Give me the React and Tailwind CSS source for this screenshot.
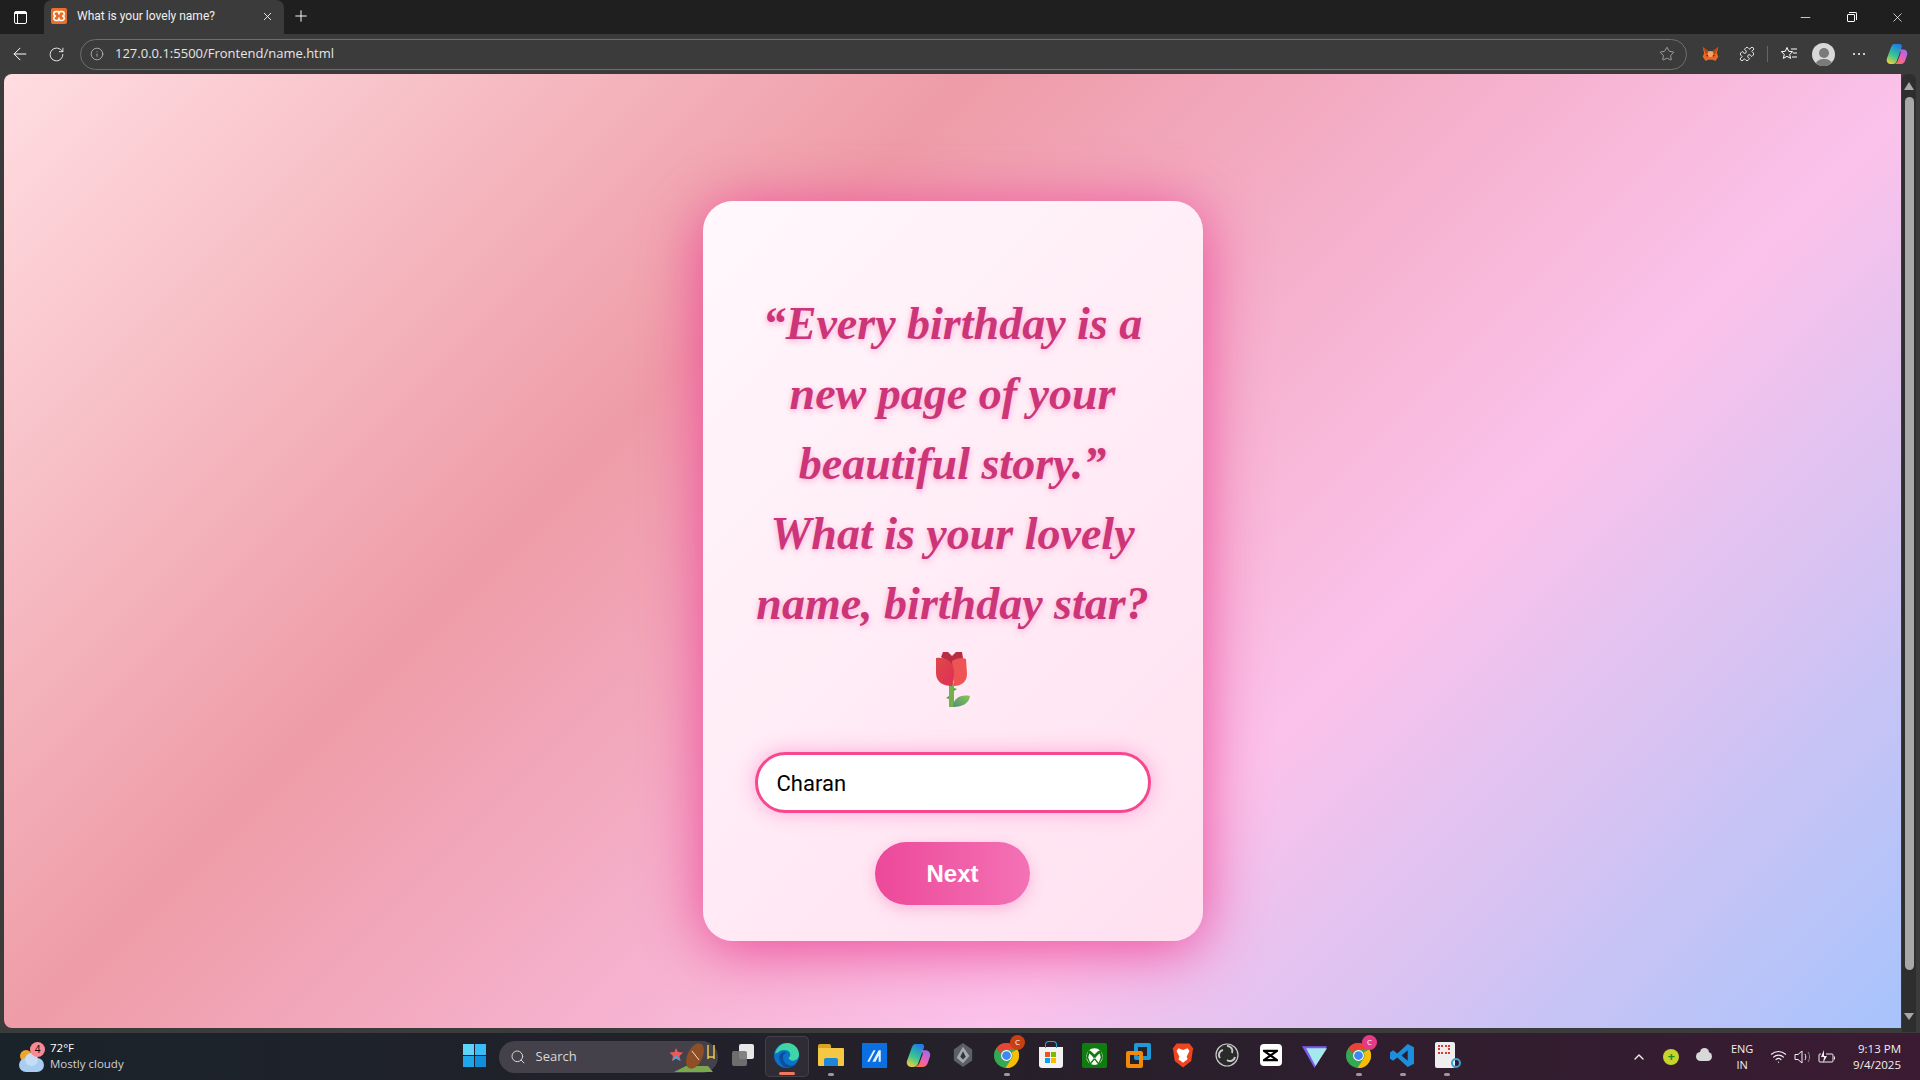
import { ArrowLeft, RotateCw, Info, Star, Puzzle, Plus, X, Minus, Search, ChevronUp, Wifi } from 'lucide-react'

const QUOTE_LINES = [
  '“Every birthday is a',
  'new page of your',
  'beautiful story.”',
  'What is your lovely',
  'name, birthday star?',
]

function Rose() {
  return (
    <svg viewBox="0 0 36 56" className="block h-[56px] w-[36px]">
      <defs>
        <linearGradient id="petal" x1="0" y1="0" x2="1" y2="1">
          <stop offset="0" stopColor="#e04848" />
          <stop offset="1" stopColor="#dd2f57" />
        </linearGradient>
        <linearGradient id="leaf" x1="1" y1="0" x2="0" y2="1">
          <stop offset="0" stopColor="#8bc653" />
          <stop offset="1" stopColor="#4f8f7a" />
        </linearGradient>
      </defs>
      <path d="M14 32h5v24h-5z" fill="#74b04c" />
      <path d="M11 47l3-2v3zM19 37l3 1-3 2z" fill="#5f9a3e" />
      <path d="M18 56c0-8 7-13 17-11-1 7-7 11-17 11z" fill="url(#leaf)" />
      <path d="M6 6l2-5 5 0 4 4 4-4 6 0 1 6-10 8z" fill="#b82c44" />
      <path d="M17 10c5-3 10-4 14-2l1 15c0 8-6 12-13 12z" fill="#ee5454" />
      <path d="M1 7c8-1 14 2 17 8 2 7 1 14-1 20-9 0-16-4-16-13z" fill="url(#petal)" />
    </svg>
  )
}

function XamppIcon() {
  return (
    <svg viewBox="0 0 16 16" className="size-4">
      <rect width="16" height="16" rx="2" fill="#e8702a" />
      <path d="M5 3.5h2L8 5.5l1-2h2a2.2 2.2 0 0 1 0 4.5 2.2 2.2 0 0 1 0 4.5H9l-1-2-1 2H5A2.2 2.2 0 0 1 5 8a2.2 2.2 0 0 1 0-4.5z" fill="none" stroke="#fff" strokeWidth="1.5" />
    </svg>
  )
}

function MetaMask() {
  return (
    <svg viewBox="0 0 24 22" className="h-[16px] w-[17px]">
      <path d="M1 1l8 6h6l8-6-2 9 2 5-4 6-4-2h-6l-4 2-4-6 2-5z" fill="#e8682a" />
      <path d="M9 7h6l1 6-4 3-4-3z" fill="#f6a168" />
      <path d="M6 12l3 1-2 2zM18 12l-3 1 2 2z" fill="#33210f" />
      <path d="M1 1l8 6-3 5zM23 1l-8 6 3 5z" fill="#b04a17" />
    </svg>
  )
}

function FavoritesIcon() {
  return (
    <svg viewBox="0 0 18 16" className="h-[16px] w-[18px]" fill="none" stroke="#fff" strokeWidth="1">
      <path d="M7 1.5l1.7 3.8 4 .4-3 2.7.9 4-3.6-2.1-3.6 2.1.9-4-3-2.7 4-.4z" />
      <path d="M11 3h6M13 7h4M12 11h5" />
    </svg>
  )
}

function CopilotIcon({ size = 22, id = 'cp' }) {
  return (
    <svg viewBox="0 0 24 24" style={{ width: size, height: size }}>
      <defs>
        <linearGradient id={`${id}a`} x1="0.6" y1="0" x2="0.2" y2="1">
          <stop offset="0" stopColor="#1f7fe0" />
          <stop offset="0.55" stopColor="#39c78f" />
          <stop offset="1" stopColor="#f4cf3c" />
        </linearGradient>
        <linearGradient id={`${id}b`} x1="0.8" y1="0" x2="0.2" y2="1">
          <stop offset="0" stopColor="#9a6cf0" />
          <stop offset="0.55" stopColor="#ee5fb8" />
          <stop offset="1" stopColor="#f5793f" />
        </linearGradient>
      </defs>
      <path d="M9 1h6c2 0 3 2 2 4l-5 14c-1 3-3 4-5 4H5c-3 0-5-3-4-6l4-11c1-3 2-5 4-5z" fill={`url(#${id}a)`} />
      <path d="M13 7h6c3 0 5 3 4 6l-2 6c-1 3-3 4-5 4h-7c2-1 3-2 4-4l3-8c.5-2-1-4-3-4z" fill={`url(#${id}b)`} />
    </svg>
  )
}

function EdgeIcon() {
  return (
    <svg viewBox="0 0 24 24" className="size-[25px]">
      <circle cx="12" cy="12" r="12" fill="#0c72c7" />
      <path d="M1 10C3 3 8 0 13 0c6 0 11 5 11 11 0 4-3 6-6 6-2 0-4-1-4-3 2-1 2-3 1-5-2-3-8-3-11 0z" fill="#3ed6a7" />
      <path d="M5 14c0-4 4-6 7-5-3 1-4 4-3 7 1 4 6 7 11 5-3 3-7 3-10 2-3-2-5-5-5-9z" fill="#0a4f9e" />
    </svg>
  )
}

function ChromeIcon() {
  return (
    <svg viewBox="0 0 24 24" className="size-[25px]">
      <circle cx="12" cy="12" r="12" fill="#34a853" />
      <path d="M12 0a12 12 0 0 1 10.4 6H12a6 6 0 0 0-5.6 3.6L2.3 5A12 12 0 0 1 12 0z" fill="#ea4335" />
      <path d="M22.4 6A12 12 0 0 1 11 24l5.2-8.2A6 6 0 0 0 17 9z" fill="#fbbc05" />
      <circle cx="12" cy="12" r="5.2" fill="#fff" />
      <circle cx="12" cy="12" r="4.2" fill="#4285f4" />
    </svg>
  )
}

function Badge({ color }) {
  return (
    <span className={`absolute -right-[6px] -top-[8px] flex size-[15px] items-center justify-center rounded-full text-[8px] text-white ${color}`}>
      C
    </span>
  )
}

function Dock({ children, dot, active }) {
  return (
    <div className={`relative flex h-[41px] w-[44px] items-center justify-center rounded-[5px] ${active ? 'border border-white/10 bg-white/5' : ''}`}>
      <div className="relative -mt-[3px] flex items-center justify-center">{children}</div>
      {dot && <span className="absolute bottom-[1px] left-1/2 h-[3px] w-[6px] -translate-x-1/2 rounded-full bg-[#9a9a9a]" />}
      {active && <span className="absolute bottom-[1px] left-1/2 h-[3px] w-[16px] -translate-x-1/2 rounded-full bg-[#f0785f]" />}
    </div>
  )
}

export default function App() {
  return (
    <div className="flex h-screen flex-col overflow-hidden bg-[#3b3b3b] font-['Open_Sans',sans-serif] text-white">

      {/* Tab strip */}
      <div className="flex h-[34px] shrink-0 items-end bg-[#1f1f1f]">
        <div className="flex h-[34px] w-[44px] items-center justify-center pr-[4px]">
          <div className="relative h-[13px] w-[13px] rounded-[2px] border-[1.5px] border-white">
            <div className="h-[2px] bg-white" />
            <div className="absolute bottom-0 left-[2px] top-0 w-[1.5px] bg-white" />
          </div>
        </div>
        <div className="flex h-[34px] w-[240px] items-center rounded-t-[8px] bg-[#3b3b3b] pb-[2px] pl-[7px] pr-[10px]">
          <XamppIcon />
          <span className="ml-[10px] flex-1 font-['Roboto',sans-serif] text-[12px] text-[#f0f0f0]">What is your lovely name?</span>
          <X size={13} strokeWidth={1.6} />
        </div>
        <div className="flex h-[34px] w-[34px] items-center justify-center pb-[2px]">
          <Plus size={18} strokeWidth={1.3} />
        </div>
        <div className="ml-auto flex h-[34px] items-center">
          <div className="flex w-[46px] justify-center"><Minus size={15} strokeWidth={1.2} /></div>
          <div className="flex w-[46px] justify-center">
            <div className="relative mt-[2px] size-[8px] rounded-[1px] border border-white after:absolute after:-right-[3px] after:-top-[3px] after:size-[8px] after:rounded-tr-[2px] after:border-r after:border-t after:border-white" />
          </div>
          <div className="flex w-[46px] justify-center"><X size={15} strokeWidth={1.2} /></div>
        </div>
      </div>

      {/* Toolbar */}
      <div className="flex h-[40px] shrink-0 items-center">
        <div className="flex w-[40px] justify-center"><ArrowLeft size={20} strokeWidth={1.2} /></div>
        <div className="flex w-[32px] justify-center"><RotateCw size={17} strokeWidth={1.2} /></div>
        <div className="ml-[8px] flex h-[31px] w-[1607px] shrink-0 items-center rounded-full border border-[#6f6f6f] pl-[9px] pr-[11px]">
          <Info size={14} strokeWidth={1.3} className="text-[#c8c8c8]" />
          <span className="ml-[11px] flex-1 text-[13px] text-[#e6e6e6]">127.0.0.1:5500/Frontend/name.html</span>
          <Star size={16} strokeWidth={1.2} className="text-[#b5b5b5]" />
        </div>
        <div className="flex w-[32px] justify-end"><MetaMask /></div>
        <div className="flex w-[37px] justify-end"><Puzzle size={16} strokeWidth={1.3} className="mr-[1px]" /></div>
        <div className="ml-[11px] h-[16px] w-px bg-[#666]" />
        <div className="ml-[8px] flex w-[26px] justify-center"><FavoritesIcon /></div>
        <div className="ml-[10px] flex size-[23px] items-end justify-center overflow-hidden rounded-full bg-[#d8d8d8]">
          <div className="relative h-[18px] w-[23px]">
            <div className="mx-auto size-[10px] rounded-full bg-[#7a7a7a]" />
            <div className="mx-auto mt-[1px] h-[8px] w-[18px] rounded-t-full bg-[#7a7a7a]" />
          </div>
        </div>
        <div className="ml-[18px] flex gap-[3px]">
          <span className="size-[2px] rounded-full bg-white" />
          <span className="size-[2px] rounded-full bg-white" />
          <span className="size-[2px] rounded-full bg-white" />
        </div>
        <div className="ml-[21px]"><CopilotIcon id="cpt" /></div>
      </div>

      {/* Page */}
      <div className="flex min-h-0 flex-1 pl-[4px]">
        <main className="flex h-[954px] flex-1 items-center justify-center rounded-l-[8px] bg-[linear-gradient(135deg,#ffdde1,#ee9ca7,#fbc2eb,#a1c4fd)] bg-[length:100%_1010px] bg-no-repeat">
          <div className="mt-[40px] flex h-[740px] w-[500px] flex-col items-center rounded-[30px] bg-[linear-gradient(135deg,#fff8fc,#ffe0f0)] px-[40px] pt-[88px] shadow-[0_8px_60px_#ec4899]">
            <h1 className="text-center font-['Liberation_Serif',cursive] text-[46px] font-bold italic leading-[70px] text-[#cc3577] [text-shadow:0_2px_6px_#f9a8d4]">
              {QUOTE_LINES.map(line => <div key={line} className="whitespace-nowrap">{line}</div>)}
            </h1>
            <div className="mt-[12px]"><Rose /></div>
            <input
              readOnly
              value="Charan"
              className="mt-[45px] h-[61px] w-[396px] rounded-full border-[3px] border-[#f7488f] bg-white pl-[19px] pt-[2px] font-['Roboto',sans-serif] text-[22px] text-black shadow-[0_0_20px_#ffa8d8] outline-none"
            />
            <button className="mt-[29px] h-[63px] w-[155px] rounded-full bg-[linear-gradient(90deg,#ec4899,#f472b6)] font-['Liberation_Sans',sans-serif] text-[24px] font-bold text-white shadow-[0_4px_15px_#fbb6d9]">
              Next
            </button>
          </div>
        </main>

        {/* Scrollbar */}
        <div className="flex w-[19px] pl-[1px]">
          <div className="flex h-[958px] w-[14px] flex-col items-center rounded-t-[6px] bg-[#2e2e2e] pt-[8px]">
            <div className="h-0 w-0 border-x-[5px] border-b-[8px] border-x-transparent border-b-[#a8a8a8]" />
            <div className="mt-[7px] h-[873px] w-[9px] rounded-full bg-[#a8a8a8]" />
            <div className="mt-[43px] h-0 w-0 border-x-[5px] border-t-[7px] border-x-transparent border-t-[#a8a8a8]" />
          </div>
        </div>
      </div>

      {/* Taskbar */}
      <div className="grid h-[47px] shrink-0 grid-cols-[1fr_auto_1fr] items-center bg-[linear-gradient(90deg,#1a232a,#25202a_50%,#3b1b33)]">
        <div className="flex items-center pl-[18px]">
          <div className="relative h-[30px] w-[32px]">
            <div className="absolute left-[2px] top-[8px] size-[12px] rounded-full bg-[#f0a52a]" />
            <div className="absolute bottom-0 left-[1px] h-[14px] w-[25px] rounded-full bg-[#a8cdf0]" />
            <div className="absolute bottom-[6px] left-[7px] size-[13px] rounded-full bg-[#c5def5]" />
            <span className="absolute left-[12px] top-0 flex size-[15px] items-center justify-center rounded-full bg-[#f98a94] text-[10px] text-black">4</span>
          </div>
          <div className="-mt-[2px] text-[11.5px] leading-[16px]">
            <div>72°F</div>
            <div className="text-[#d0d0d0]">Mostly cloudy</div>
          </div>
        </div>

        <div className="flex items-center">
          <Dock>
            <div className="ml-[1px] grid grid-cols-2 gap-[1px]">
              <span className="size-[11px] bg-[#5fd4fb]" />
              <span className="size-[11px] bg-[#38bdf8]" />
              <span className="size-[11px] bg-[#1fa5ea]" />
              <span className="size-[11px] bg-[#0f8fdc]" />
            </div>
          </Dock>
          <div className="mx-[3px] flex h-[32px] w-[219px] items-center rounded-full bg-[#45414a] pl-[11px] pr-[2px] text-[13px] text-[#d8d8d8]">
            <Search size={16} strokeWidth={1.5} />
            <span className="ml-[10px] flex-1">Search</span>
            <svg viewBox="0 0 48 30" className="h-[30px] w-[48px]">
              <path d="M6 30L18 24h22l5 6z" fill="#7ba84f" />
              <path d="M8 6l2 4 5 .5-3.5 3.5 1 5-4.5-2.5L4 19l1-5-3.5-3.5 5-.5z" fill="#e85b5b" />
              <path d="M8 13l5 6-5-2.5L4 19z" fill="#45a5e5" />
              <ellipse cx="27" cy="14" rx="7.5" ry="13.5" transform="rotate(25 27 14)" fill="#8f4f26" />
              <path d="M24 9l7 9" stroke="#f0e0c8" strokeWidth="1" />
              <path d="M40 3v14M46 3v14M40 15h6" stroke="#e8c84f" strokeWidth="1.5" fill="none" />
            </svg>
          </div>
          <Dock>
            <div className="relative size-[22px]">
              <div className="absolute right-0 top-0 size-[15px] rounded-[2px] bg-[#e8e8e8]" />
              <div className="absolute bottom-0 left-0 size-[15px] rounded-[2px] bg-[#777]/90" />
            </div>
          </Dock>
          <Dock active><EdgeIcon /></Dock>
          <Dock dot>
            <div className="relative h-[22px] w-[26px]">
              <div className="absolute left-0 top-0 h-[8px] w-[13px] rounded-t-[2px] bg-[#d9a520]" />
              <div className="absolute bottom-0 h-[18px] w-[26px] rounded-[1px] bg-[#f5c843]" />
              <div className="absolute bottom-0 left-[6px] h-[8px] w-[14px] rounded-t-[2px] bg-[#1d86d8]" />
            </div>
          </Dock>
          <Dock>
            <svg viewBox="0 0 24 24" className="size-[25px]">
              <rect width="24" height="24" fill="#0a6fe0" />
              <path d="M5 18L11 7h2l-6 11zM10 18l6-11h2v11h-2v-6l-3 6z" fill="#e8f2ff" />
            </svg>
          </Dock>
          <Dock><CopilotIcon size={25} id="cpd" /></Dock>
          <Dock>
            <svg viewBox="0 0 24 28" className="h-[28px] w-[22px]">
              <path d="M12 1l10 7v12l-10 7-10-7V8z" fill="#5b6066" />
              <path d="M12 5l7 10-7 8-7-6z" fill="#a5a9ad" />
              <path d="M12 10l3 6-3 3-3-3z" fill="#33373b" />
            </svg>
          </Dock>
          <Dock dot>
            <ChromeIcon />
            <Badge color="bg-[#c8400f]" />
          </Dock>
          <Dock>
            <div className="relative mt-[4px] h-[21px] w-[24px] rounded-b-[3px] bg-[#f2f2f2]">
              <div className="absolute -top-[6px] left-[6px] h-[7px] w-[12px] rounded-t-[4px] border-[1.5px] border-b-0 border-[#27a8e0]" />
              <div className="absolute left-[6px] top-[5px] grid grid-cols-2 gap-[1px]">
                <span className="size-[5px] bg-[#f25022]" />
                <span className="size-[5px] bg-[#7fba00]" />
                <span className="size-[5px] bg-[#00a4ef]" />
                <span className="size-[5px] bg-[#ffb900]" />
              </div>
            </div>
          </Dock>
          <Dock>
            <svg viewBox="0 0 24 24" className="size-[25px]">
              <rect width="24" height="24" rx="2" fill="#107c10" />
              <circle cx="12" cy="13" r="8" fill="#fff" />
              <path d="M6 7c2 0 4 2 6 4 2-2 4-4 6-4l2 7-4 7-4-5-4 5-4-7z" fill="#107c10" />
              <path d="M7 10c2 1 3 3 5 5 2-2 3-4 5-5l1 4-2 5-4-5-4 5-2-5z" fill="#fff" />
            </svg>
          </Dock>
          <Dock>
            <div className="relative size-[25px]">
              <div className="absolute right-0 top-0 size-[17px] rounded-[2px] border-[4px] border-[#1d9ad6]" />
              <div className="absolute bottom-0 left-0 size-[17px] rounded-[2px] border-[4px] border-[#f08a0c]" />
            </div>
          </Dock>
          <Dock>
            <svg viewBox="0 0 24 28" className="h-[27px] w-[22px]">
              <path d="M5 1h14l4 5-2 14-9 7-9-7L1 6z" fill="#f0441f" />
              <path d="M12 8l5-2 2 3-3 6 1 3-5 4-5-4 1-3-3-6 2-3z" fill="#fff" />
            </svg>
          </Dock>
          <Dock>
            <svg viewBox="0 0 24 24" className="size-[24px]">
              <circle cx="12" cy="12" r="11" fill="#2a2a2a" stroke="#c8c8c8" strokeWidth="1.2" />
              <path d="M12 3a5 5 0 0 1 5 7M20 14a5 5 0 0 1-8 3M5 15a5 5 0 0 1 3-8" fill="none" stroke="#c8c8c8" strokeWidth="2" />
            </svg>
          </Dock>
          <Dock>
            <div className="flex size-[22px] items-center justify-center rounded-[4px] bg-white">
              <svg viewBox="0 0 16 16" className="size-[15px]">
                <path d="M1 3h14L1 13h14z" fill="none" stroke="#000" strokeWidth="2.4" />
              </svg>
            </div>
          </Dock>
          <Dock>
            <svg viewBox="0 0 24 24" className="size-[25px]">
              <path d="M0 3h24L12 24z" fill="#7c5cf0" />
              <path d="M4 5h20L13 22z" fill="#a5e8ee" />
            </svg>
          </Dock>
          <Dock dot>
            <ChromeIcon />
            <Badge color="bg-[#e63a84]" />
          </Dock>
          <Dock dot>
            <svg viewBox="0 0 24 24" className="size-[25px]">
              <path d="M17 1l6 3v16l-6 3L7 14l-4 3-3-2V9l3-2 4 3zM17 7l-6 5 6 5z" fill="#1b8fdc" />
            </svg>
          </Dock>
          <Dock dot>
            <div className="relative mr-[3px] h-[26px] w-[20px] rounded-[2px] bg-[#eeeeee]">
              <div className="absolute left-[3px] top-[3px] h-[9px] w-[12px] border-[2px] border-dotted border-[#d93a2f]" />
              <div className="absolute -right-[6px] bottom-0 h-[10px] w-[10px] rounded-full border-2 border-[#3aa0d8]" />
            </div>
          </Dock>
        </div>

        <div className="flex items-center justify-end pr-[19px] text-[#f0f0f0]">
          <ChevronUp size={16} strokeWidth={2} />
          <div className="ml-[16px] flex size-[16px] items-center justify-center rounded-full bg-[#c8d42a] text-[13px] font-bold leading-none text-[#1a8a2a]">+</div>
          <div className="relative ml-[17px] h-[9px] w-[16px] rounded-full bg-[#d8d8d8] after:absolute after:-top-[4px] after:left-[4px] after:size-[9px] after:rounded-full after:bg-[#d8d8d8]" />
          <div className="ml-[15px] w-[30px] text-center text-[11px] leading-[16px]">
            <div>ENG</div>
            <div>IN</div>
          </div>
          <div className="ml-[13px]"><Wifi size={17} strokeWidth={1.6} /></div>
          <svg viewBox="0 0 18 16" className="ml-[7px] h-[16px] w-[18px]" fill="none" stroke="#f0f0f0" strokeWidth="1">
            <path d="M1 5.5h3l4-3.5v12l-4-3.5H1z" />
            <path d="M11 5c1 2 1 4 0 6" />
            <path d="M14 3c2 3 2 7 0 10" stroke="#8a8a8a" />
          </svg>
          <svg viewBox="0 0 18 16" className="ml-[6px] h-[16px] w-[18px]" fill="none" stroke="#f0f0f0" strokeWidth="1">
            <path d="M3 5H2a1 1 0 0 0-1 1v6a1 1 0 0 0 1 1h12a1 1 0 0 0 1-1V6a1 1 0 0 0-1-1H8" />
            <path d="M16.5 7.5v3" />
            <path d="M6 1L3 8h3l-1 6 4-7H6z" fill="#f0f0f0" stroke="none" />
          </svg>
          <div className="ml-[17px] text-right text-[11.5px] leading-[16px]">
            <div>9:13 PM</div>
            <div>9/4/2025</div>
          </div>
        </div>
      </div>
    </div>
  )
}
